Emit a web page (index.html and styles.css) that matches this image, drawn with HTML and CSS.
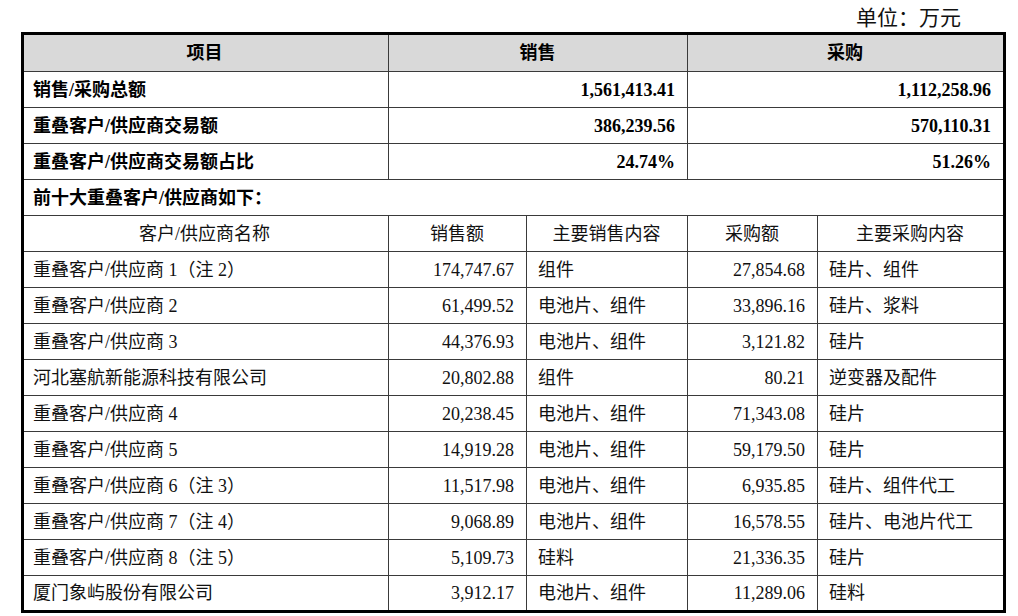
FILE: index.html
```html
<!DOCTYPE html>
<html lang="zh-CN">
<head>
<meta charset="utf-8">
<title>重叠客户/供应商</title>
<link rel="stylesheet" href="styles.css">
</head>
<body>
<div class="page">
  <div class="unit">单位：万元</div>
  <table class="grid">
    <colgroup>
      <col class="c1"><col class="c2"><col class="c3"><col class="c4"><col class="c5">
    </colgroup>
    <tr class="head">
      <td class="center">项目</td>
      <td class="center" colspan="2">销售</td>
      <td class="center" colspan="2">采购</td>
    </tr>
    <tr class="bold">
      <td>销售/采购总额</td>
      <td class="num" colspan="2">1,561,413.41</td>
      <td class="num" colspan="2">1,112,258.96</td>
    </tr>
    <tr class="bold">
      <td>重叠客户/供应商交易额</td>
      <td class="num" colspan="2">386,239.56</td>
      <td class="num" colspan="2">570,110.31</td>
    </tr>
    <tr class="bold">
      <td>重叠客户/供应商交易额占比</td>
      <td class="num" colspan="2">24.74%</td>
      <td class="num" colspan="2">51.26%</td>
    </tr>
    <tr class="bold">
      <td colspan="5">前十大重叠客户/供应商如下：</td>
    </tr>
    <tr class="sub">
      <td class="center">客户/供应商名称</td>
      <td class="center">销售额</td>
      <td class="center">主要销售内容</td>
      <td class="center">采购额</td>
      <td class="center">主要采购内容</td>
    </tr>
    <tr><td>重叠客户/供应商 1（注 2）</td><td class="num">174,747.67</td><td>组件</td><td class="num">27,854.68</td><td>硅片、组件</td></tr>
    <tr><td>重叠客户/供应商 2</td><td class="num">61,499.52</td><td>电池片、组件</td><td class="num">33,896.16</td><td>硅片、浆料</td></tr>
    <tr><td>重叠客户/供应商 3</td><td class="num">44,376.93</td><td>电池片、组件</td><td class="num">3,121.82</td><td>硅片</td></tr>
    <tr><td>河北塞航新能源科技有限公司</td><td class="num">20,802.88</td><td>组件</td><td class="num">80.21</td><td>逆变器及配件</td></tr>
    <tr><td>重叠客户/供应商 4</td><td class="num">20,238.45</td><td>电池片、组件</td><td class="num">71,343.08</td><td>硅片</td></tr>
    <tr><td>重叠客户/供应商 5</td><td class="num">14,919.28</td><td>电池片、组件</td><td class="num">59,179.50</td><td>硅片</td></tr>
    <tr><td>重叠客户/供应商 6（注 3）</td><td class="num">11,517.98</td><td>电池片、组件</td><td class="num">6,935.85</td><td>硅片、组件代工</td></tr>
    <tr><td>重叠客户/供应商 7（注 4）</td><td class="num">9,068.89</td><td>电池片、组件</td><td class="num">16,578.55</td><td>硅片、电池片代工</td></tr>
    <tr><td>重叠客户/供应商 8（注 5）</td><td class="num">5,109.73</td><td>硅料</td><td class="num">21,336.35</td><td>硅片</td></tr>
    <tr><td>厦门象屿股份有限公司</td><td class="num">3,912.17</td><td>电池片、组件</td><td class="num">11,289.06</td><td>硅料</td></tr>
  </table>
</div>
</body>
</html>
```
FILE: styles.css
```css
html, body {
  margin: 0;
  padding: 0;
  background: #ffffff;
}
body {
  font-family: "Liberation Serif", "Noto Sans CJK SC", serif;
  color: #111111;
}
.page {
  padding-left: 21px;
  width: 982px;
}
.unit {
  height: 32px;
  line-height: 36px;
  font-size: 21px;
  text-align: right;
  padding-right: 42px;
  color: #111111;
}
.grid {
  width: 982px;
  table-layout: fixed;
  border-collapse: collapse;
  border: 3px solid #000000;
  font-size: 18px;
}
.c1 { width: 366px; }
.c2 { width: 138px; }
.c3 { width: 161px; }
.c4 { width: 130px; }
.c5 { width: 187px; }
.grid tr {
  height: 36px;
}
.grid tr.head {
  height: 38px;
}
.grid td {
  border: 1px solid #3a3a3a;
  padding: 0 12px 0 11px;
  white-space: nowrap;
  vertical-align: middle;
  line-height: 20px;
}
.grid td:first-child {
  padding-left: 9px;
}
.grid .center {
  text-align: center;
}
.grid .num {
  text-align: right;
}
.head td {
  background: #d9d9d9;
  font-weight: bold;
  color: #000000;
}
.bold td {
  font-weight: bold;
  color: #000000;
}
```
